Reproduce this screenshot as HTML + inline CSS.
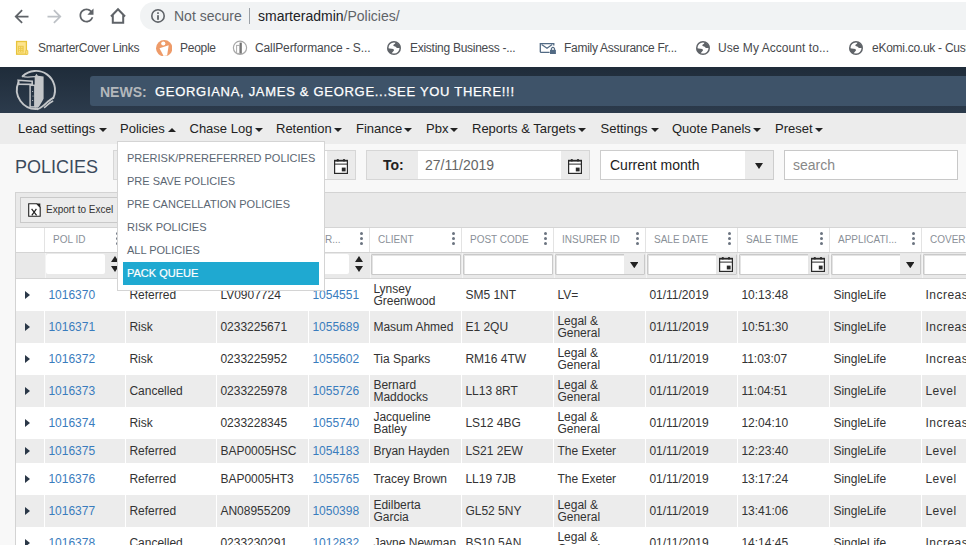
<!DOCTYPE html>
<html><head><meta charset="utf-8"><style>
*{box-sizing:border-box;margin:0;padding:0}
html,body{width:966px;height:545px;overflow:hidden;background:#f8f8f8;font-family:"Liberation Sans",sans-serif}
.a{position:absolute;white-space:nowrap}
#chrome{position:absolute;left:0;top:0;width:966px;height:67px;background:#fff}
#omni{position:absolute;left:140px;top:2px;width:900px;height:28px;border-radius:14px;background:#f1f3f4}
.omt{position:absolute;top:8px;font-size:14px;line-height:16px;white-space:nowrap}
.bm{position:absolute;top:40.5px;font-size:12px;line-height:14px;letter-spacing:-0.27px;color:#47494d;white-space:nowrap}
#hdr{position:absolute;left:0;top:67px;width:966px;height:46px;background:linear-gradient(#1f2c3a,#2c3b4c)}
#news{position:absolute;left:90px;top:76px;width:890px;height:30px;border-radius:3px;background:#3e5369}
#nav{position:absolute;left:0;top:113px;width:966px;height:31px;background:#ececec}
.nv{position:absolute;top:122px;font-size:13px;line-height:14px;color:#222;white-space:nowrap}
.car{position:absolute;width:0;height:0;border-left:4px solid transparent;border-right:4px solid transparent}
.cd{border-top:4px solid #222}
.cu{border-bottom:4px solid #222}
#grid{position:absolute;left:15px;top:192px;width:960px;height:360px;border:1px solid #d3d3d3;border-right:none;background:#fff}
#gtb{position:absolute;left:16px;top:193px;width:950px;height:35px;background:#e9e9e9;border-bottom:1px solid #d5d5d5}
.row{position:absolute;left:16px;width:950px}
.g{background:#ececec}
.c{position:absolute;top:0;height:100%;font-size:12px;line-height:12px;color:#333;white-space:nowrap;display:flex;align-items:center;padding-left:3.4px}
.lnk{color:#3a7cbd}
.sep{position:absolute;top:0;height:100%;width:1px;background:#fff}
.hd{position:absolute;top:235px;font-size:10px;line-height:10px;color:#8a9098;white-space:nowrap}
.keb{position:absolute;top:232px;width:3px;height:14px}
.keb i{position:absolute;left:0;width:3px;height:3px;border-radius:50%;background:#6b7480}
.fin{position:absolute;top:254px;height:21px;background:#fff;border:1px solid #c9c9c9;box-shadow:inset 1px 1px 0 #e4e4e4;border-radius:1px}
#menu{position:absolute;left:117px;top:141px;width:208px;height:150px;background:#fff;border:1px solid #d4d4d4}
.mi{position:absolute;left:127px;font-size:11px;line-height:12px;color:#5b6672;white-space:nowrap}
</style></head><body>
<div id="chrome"><div id="omni"></div></div>
<svg class="a" style="left:11.3px;top:5.6px" width="21" height="21" viewBox="0 0 24 24"><path fill="#5f6368" d="M20 11H7.83l5.59-5.59L12 4l-8 8 8 8 1.41-1.41L7.83 13H20v-2z"/></svg>
<svg class="a" style="left:43.6px;top:5.6px" width="21" height="21" viewBox="0 0 24 24"><path fill="#bdc1c6" d="M12 4l-1.41 1.41L16.17 11H4v2h12.17l-5.58 5.59L12 20l8-8z"/></svg>
<svg class="a" style="left:75.5px;top:5.3px" width="21" height="21" viewBox="0 0 24 24"><path fill="#5f6368" d="M17.65 6.35C16.2 4.9 14.21 4 12 4c-4.42 0-7.99 3.58-7.99 8s3.57 8 7.99 8c3.73 0 6.84-2.55 7.73-6h-2.08c-.82 2.33-3.04 4-5.65 4-3.31 0-6-2.69-6-6s2.69-6 6-6c1.66 0 3.14.69 4.22 1.78L13 11h7V4l-2.35 2.35z"/></svg>
<svg class="a" style="left:108px;top:6px" width="20" height="20" viewBox="0 0 20 20"><path fill="none" stroke="#5f6368" stroke-width="2" stroke-linejoin="miter" d="M3 10.5 L10 3.2 L17 10.5 M4.8 8.8 V16.8 H15.2 V8.8"/></svg>
<svg class="a" style="left:150px;top:8px" width="16" height="16" viewBox="0 0 16 16"><circle cx="8" cy="7.9" r="6.2" fill="none" stroke="#5f6368" stroke-width="1.6"/><rect x="7.1" y="4.3" width="1.8" height="1.6" fill="#5f6368"/><rect x="7.1" y="7.2" width="1.8" height="4.6" fill="#5f6368"/></svg>
<div class="omt" style="left:174px;color:#5f6368">Not secure</div>
<div class="a" style="left:249px;top:8px;width:1px;height:16px;background:#9aa0a6"></div>
<div class="omt" style="left:258px;color:#202124">smarteradmin<span style="color:#5f6368">/Policies/</span></div>
<svg class="a" style="left:387px;top:40.8px" width="14" height="14" viewBox="0 0 14 14"><circle cx="7" cy="7" r="7" fill="#5f6368"/><circle cx="7" cy="7" r="5.5" fill="#fff"/><path fill="#5f6368" d="M6.2 3.9 L7.9 2.8 L9 1 L13.5 5 L12.8 6.9 L9.9 6.9 L8.7 5.7 L6.7 5.1 Z"/><path fill="#5f6368" d="M0.8 7.3 L6.3 8.1 L7.1 9.3 L5.9 10.8 L4.7 12.2 L3 12.6 L0.6 9 Z"/></svg>
<svg class="a" style="left:695.5px;top:40.8px" width="14" height="14" viewBox="0 0 14 14"><circle cx="7" cy="7" r="7" fill="#5f6368"/><circle cx="7" cy="7" r="5.5" fill="#fff"/><path fill="#5f6368" d="M6.2 3.9 L7.9 2.8 L9 1 L13.5 5 L12.8 6.9 L9.9 6.9 L8.7 5.7 L6.7 5.1 Z"/><path fill="#5f6368" d="M0.8 7.3 L6.3 8.1 L7.1 9.3 L5.9 10.8 L4.7 12.2 L3 12.6 L0.6 9 Z"/></svg>
<svg class="a" style="left:849px;top:40.8px" width="14" height="14" viewBox="0 0 14 14"><circle cx="7" cy="7" r="7" fill="#5f6368"/><circle cx="7" cy="7" r="5.5" fill="#fff"/><path fill="#5f6368" d="M6.2 3.9 L7.9 2.8 L9 1 L13.5 5 L12.8 6.9 L9.9 6.9 L8.7 5.7 L6.7 5.1 Z"/><path fill="#5f6368" d="M0.8 7.3 L6.3 8.1 L7.1 9.3 L5.9 10.8 L4.7 12.2 L3 12.6 L0.6 9 Z"/></svg>
<svg class="a" style="left:15px;top:40px" width="14" height="16" viewBox="0 0 14 16"><rect x="1.6" y="1.5" width="9.8" height="12.7" fill="#fde48e" stroke="#e8c43c" stroke-width="1.3"/><rect x="3.1" y="5.8" width="5.6" height="6.7" fill="#ecc94a"/><g fill="#fde48e"><rect x="4" y="6.8" width="1.1" height="1.1"/><rect x="6.3" y="6.8" width="1.1" height="1.1"/><rect x="4" y="8.8" width="1.1" height="1.1"/><rect x="6.3" y="8.8" width="1.1" height="1.1"/><rect x="4" y="10.8" width="1.1" height="1.1"/><rect x="6.3" y="10.8" width="1.1" height="1.1"/></g><rect x="10.8" y="10.3" width="2" height="4.2" rx="0.6" fill="#fde48e" stroke="#e8c43c" stroke-width="0.9"/></svg>
<svg class="a" style="left:155.8px;top:39.8px" width="16.4" height="16.4" viewBox="0 0 16.4 16.4"><circle cx="8.2" cy="8.2" r="8.2" fill="#ee9b69"/><circle cx="7.3" cy="3.5" r="2.1" fill="#fff"/><path fill="#fff" d="M3.5 8.3 L12.7 5.3 L11.1 15.4 L7.6 16 Z"/></svg>
<svg class="a" style="left:232px;top:40px" width="16" height="16" viewBox="0 0 16 16"><circle cx="8" cy="7.8" r="6.6" fill="none" stroke="#a8a8a8" stroke-width="1.2"/><rect x="7.6" y="2.6" width="2.2" height="11" fill="#707070"/><rect x="4.6" y="5.4" width="3" height="8" fill="#fff" stroke="#aaa" stroke-width="1"/></svg>
<svg class="a" style="left:539px;top:42px" width="18" height="13" viewBox="0 0 18 13"><path fill="none" stroke="#526a84" stroke-width="1.3" d="M10.6 10.3 H1.8 Q1.3 10.3 1.3 9.8 V1.7 H14.8 V3.5"/><path fill="none" stroke="#526a84" stroke-width="1.2" d="M2.6 2.6 L8 6.3 L13.2 2.6"/><rect x="11" y="7.8" width="5.9" height="4.2" fill="#526a84"/><path fill="none" stroke="#526a84" stroke-width="1.1" d="M12.4 7.9 V6.5 Q13.95 4.3 15.5 6.5 V7.9"/></svg>
<div class="bm" style="left:38px;">SmarterCover Links</div>
<div class="bm" style="left:180px;">People</div>
<div class="bm" style="left:255px;letter-spacing:-0.12px">CallPerformance - S...</div>
<div class="bm" style="left:410px;">Existing Business -...</div>
<div class="bm" style="left:564px;">Family Assurance Fr...</div>
<div class="bm" style="left:718px;letter-spacing:0.05px">Use My Account to...</div>
<div class="bm" style="left:872px;">eKomi.co.uk - Customer</div>
<div id="hdr"></div><div id="news"></div>
<svg class="a" style="left:12px;top:67px" width="50" height="46" viewBox="12 67 50 46"><g fill="none" stroke="#c3c6c9" stroke-width="1.9" stroke-linecap="round"><path d="M22.6 76.3 A19.1 19.1 0 0 1 53.3 97.9"/><path d="M18.5 82.2 A19.1 19.1 0 0 0 37.6 108.9"/><path d="M37.4 109.2 C42 108 45 104 48 101.5 C50.5 99.6 52 98.4 53.3 97.9"/><path d="M44.6 107.4 C47 105.5 49.5 102.5 52.6 101.2" stroke-width="1.6"/><path d="M22.6 76.3 C26 77.8 30 76.8 34.7 76.7" stroke-width="1.3"/><path d="M18.2 80.2 L32.2 81.2 L32.2 84.4 L18.7 84.2 Z" stroke-width="1.6"/><rect x="30.1" y="85.3" width="4.8" height="21.6" stroke-width="1.5"/></g><path fill="#c3c6c9" d="M34.7 76.4 L36.4 73.8 L37.9 75.8 L43.6 76.4 L43.6 98.8 C41.5 102.5 40 105.5 38 107.8 L34.7 107.8 Z"/><g fill="#c3c6c9"><circle cx="32.6" cy="91.5" r="0.6"/><circle cx="33" cy="96" r="0.6"/><circle cx="32.6" cy="100.5" r="0.6"/></g></svg>
<div class="a" style="left:100px;top:85px;font-size:14px;line-height:14px;font-weight:bold;color:#b4b8bc">NEWS:</div>
<div class="a" style="left:155px;top:85px;font-size:13px;line-height:13px;color:#fff;letter-spacing:0.7px;-webkit-text-stroke:0.25px #fff">GEORGIANA, JAMES &amp; GEORGE...SEE YOU THERE!!!</div>
<div id="nav"></div>
<div class="nv" style="left:18px">Lead settings</div>
<div class="car cd" style="left:99px;top:128px"></div>
<div class="nv" style="left:120px">Policies</div>
<div class="car cu" style="left:168px;top:128px"></div>
<div class="nv" style="left:189.5px">Chase Log</div>
<div class="car cd" style="left:255px;top:128px"></div>
<div class="nv" style="left:276px">Retention</div>
<div class="car cd" style="left:334px;top:128px"></div>
<div class="nv" style="left:356px">Finance</div>
<div class="car cd" style="left:404px;top:128px"></div>
<div class="nv" style="left:426px">Pbx</div>
<div class="car cd" style="left:450px;top:128px"></div>
<div class="nv" style="left:472px">Reports &amp; Targets</div>
<div class="car cd" style="left:578px;top:128px"></div>
<div class="nv" style="left:600.5px">Settings</div>
<div class="car cd" style="left:651px;top:128px"></div>
<div class="nv" style="left:672px">Quote Panels</div>
<div class="car cd" style="left:753px;top:128px"></div>
<div class="nv" style="left:775px">Preset</div>
<div class="car cd" style="left:815px;top:128px"></div>
<div class="a" style="left:15px;top:158px;font-size:18px;line-height:18px;color:#3b4a5c">POLICIES</div>
<div class="a" style="left:113px;top:150px;width:243px;height:30px;background:#ebebeb;border:1px solid #d6d6d6"></div>
<div class="a" style="left:164px;top:151px;width:163px;height:28px;background:#fff"></div>
<svg class="a" style="left:334px;top:159px" width="14" height="15" viewBox="0 0 14 15"><rect x="0.6" y="1.4" width="12.8" height="13" fill="#fff" stroke="#2a2a2a" stroke-width="1.2"/><rect x="0.6" y="1" width="12.8" height="1.6" fill="#2a2a2a"/><rect x="0.6" y="4.6" width="12.8" height="1" fill="#2a2a2a"/><circle cx="3.8" cy="1.3" r="1.2" fill="#2a2a2a"/><circle cx="10" cy="1.3" r="1.2" fill="#2a2a2a"/><rect x="7.8" y="8.6" width="3.8" height="3.8" fill="#2a2a2a"/></svg>
<div class="a" style="left:366px;top:150px;width:224px;height:30px;background:#ebebeb;border:1px solid #d6d6d6"></div>
<div class="a" style="left:418px;top:151px;width:143px;height:28px;background:#fff"></div>
<svg class="a" style="left:568px;top:159px" width="14" height="15" viewBox="0 0 14 15"><rect x="0.6" y="1.4" width="12.8" height="13" fill="#fff" stroke="#2a2a2a" stroke-width="1.2"/><rect x="0.6" y="1" width="12.8" height="1.6" fill="#2a2a2a"/><rect x="0.6" y="4.6" width="12.8" height="1" fill="#2a2a2a"/><circle cx="3.8" cy="1.3" r="1.2" fill="#2a2a2a"/><circle cx="10" cy="1.3" r="1.2" fill="#2a2a2a"/><rect x="7.8" y="8.6" width="3.8" height="3.8" fill="#2a2a2a"/></svg>
<div class="a" style="left:383px;top:158px;font-size:14px;line-height:14px;font-weight:bold;color:#222">To:</div>
<div class="a" style="left:425px;top:158px;font-size:14px;line-height:14px;color:#666">27/11/2019</div>
<div class="a" style="left:600px;top:150px;width:174px;height:30px;background:#fff;border:1px solid #cdcdcd"></div>
<div class="a" style="left:745px;top:151px;width:28px;height:28px;background:#ebebeb"></div>
<svg class="a" style="left:755px;top:163px" width="8" height="6" viewBox="0 0 8 6"><path d="M0 0 L4.0 6 L8 0 Z" fill="#222"/></svg>
<div class="a" style="left:610px;top:158px;font-size:14px;line-height:14px;color:#222">Current month</div>
<div class="a" style="left:784px;top:150px;width:174px;height:30px;background:#fff;border:1px solid #c8c8c8"></div>
<div class="a" style="left:793px;top:158px;font-size:14px;line-height:14px;color:#888">search</div>
<div id="grid"></div><div id="gtb"></div>
<div class="a" style="left:20px;top:197px;width:300px;height:26px;background:#ececec;border:1px solid #c9c9c9"></div>
<svg class="a" style="left:28px;top:203px" width="13" height="14" viewBox="0 0 13 14"><path d="M0.7 0.7 H8.6 L12.2 4.3 V13.3 H0.7 Z" fill="#fff" stroke="#222" stroke-width="1.1"/><path d="M8.4 0.6 L12.3 4.5 L12.3 0.6 Z" fill="#222"/><path d="M3.6 5.8 L8.6 12.4 M8.4 5.8 L3.8 12.4" stroke="#222" stroke-width="1.2"/></svg>
<div class="a" style="left:46px;top:205px;font-size:10px;line-height:10px;color:#333">Export to Excel</div>
<div class="a" style="left:16px;top:228px;width:950px;height:24px;background:#fff"></div>
<div class="a" style="left:16px;top:252px;width:950px;height:27px;background:#e9e9e9;border-top:1px solid #d4d4d4;border-bottom:1px solid #d4d4d4"></div>
<div class="a" style="left:44px;top:228px;width:1px;height:24px;background:#e3e3e3"></div>
<div class="a" style="left:44.5px;top:253px;width:1.2px;height:25px;background:#f4f4f4"></div>
<div class="a" style="left:125px;top:228px;width:1px;height:24px;background:#e3e3e3"></div>
<div class="a" style="left:125.5px;top:253px;width:1.2px;height:25px;background:#f4f4f4"></div>
<div class="a" style="left:216px;top:228px;width:1px;height:24px;background:#e3e3e3"></div>
<div class="a" style="left:216.5px;top:253px;width:1.2px;height:25px;background:#f4f4f4"></div>
<div class="a" style="left:308px;top:228px;width:1px;height:24px;background:#e3e3e3"></div>
<div class="a" style="left:308.5px;top:253px;width:1.2px;height:25px;background:#f4f4f4"></div>
<div class="a" style="left:369px;top:228px;width:1px;height:24px;background:#e3e3e3"></div>
<div class="a" style="left:369.5px;top:253px;width:1.2px;height:25px;background:#f4f4f4"></div>
<div class="a" style="left:461px;top:228px;width:1px;height:24px;background:#e3e3e3"></div>
<div class="a" style="left:461.5px;top:253px;width:1.2px;height:25px;background:#f4f4f4"></div>
<div class="a" style="left:553px;top:228px;width:1px;height:24px;background:#e3e3e3"></div>
<div class="a" style="left:553.5px;top:253px;width:1.2px;height:25px;background:#f4f4f4"></div>
<div class="a" style="left:645px;top:228px;width:1px;height:24px;background:#e3e3e3"></div>
<div class="a" style="left:645.5px;top:253px;width:1.2px;height:25px;background:#f4f4f4"></div>
<div class="a" style="left:737px;top:228px;width:1px;height:24px;background:#e3e3e3"></div>
<div class="a" style="left:737.5px;top:253px;width:1.2px;height:25px;background:#f4f4f4"></div>
<div class="a" style="left:829px;top:228px;width:1px;height:24px;background:#e3e3e3"></div>
<div class="a" style="left:829.5px;top:253px;width:1.2px;height:25px;background:#f4f4f4"></div>
<div class="a" style="left:921px;top:228px;width:1px;height:24px;background:#e3e3e3"></div>
<div class="a" style="left:921.5px;top:253px;width:1.2px;height:25px;background:#f4f4f4"></div>
<div class="hd" style="left:53px">POL ID</div>
<div class="hd" style="left:378px">CLIENT</div>
<div class="hd" style="left:470px">POST CODE</div>
<div class="hd" style="left:562px">INSURER ID</div>
<div class="hd" style="left:654px">SALE DATE</div>
<div class="hd" style="left:746px">SALE TIME</div>
<div class="hd" style="left:838px">APPLICATI...</div>
<div class="hd" style="left:930px">COVER</div>
<div class="hd" style="left:325px">R...</div>
<div class="keb" style="left:116px"><i style="top:0"></i><i style="top:5px"></i><i style="top:10px"></i></div>
<div class="keb" style="left:207px"><i style="top:0"></i><i style="top:5px"></i><i style="top:10px"></i></div>
<div class="keb" style="left:299px"><i style="top:0"></i><i style="top:5px"></i><i style="top:10px"></i></div>
<div class="keb" style="left:360px"><i style="top:0"></i><i style="top:5px"></i><i style="top:10px"></i></div>
<div class="keb" style="left:452px"><i style="top:0"></i><i style="top:5px"></i><i style="top:10px"></i></div>
<div class="keb" style="left:544px"><i style="top:0"></i><i style="top:5px"></i><i style="top:10px"></i></div>
<div class="keb" style="left:636px"><i style="top:0"></i><i style="top:5px"></i><i style="top:10px"></i></div>
<div class="keb" style="left:728px"><i style="top:0"></i><i style="top:5px"></i><i style="top:10px"></i></div>
<div class="keb" style="left:820px"><i style="top:0"></i><i style="top:5px"></i><i style="top:10px"></i></div>
<div class="keb" style="left:912px"><i style="top:0"></i><i style="top:5px"></i><i style="top:10px"></i></div>
<div class="fin" style="left:923px;width:60px"></div>
<div class="a" style="left:46px;top:254px;width:59px;height:20px;background:#fff;border-radius:2px"></div>
<div class="fin" style="left:127px;width:89px"></div>
<div class="fin" style="left:218px;width:90px"></div>
<div class="a" style="left:310px;top:254px;width:39px;height:20px;background:#fff;border-radius:2px"></div>
<div class="fin" style="left:371px;width:90px"></div>
<div class="fin" style="left:463px;width:90px"></div>
<div class="fin" style="left:555px;width:90px"></div>
<div class="fin" style="left:647px;width:90px"></div>
<div class="fin" style="left:739px;width:90px"></div>
<div class="fin" style="left:831px;width:90px"></div>
<svg class="a" style="left:111px;top:256px" width="8" height="6" viewBox="0 0 8 6"><path d="M0 6 L4.0 0 L8 6 Z" fill="#222"/></svg>
<svg class="a" style="left:111px;top:266px" width="8" height="6" viewBox="0 0 8 6"><path d="M0 0 L4.0 6 L8 0 Z" fill="#222"/></svg>
<svg class="a" style="left:355px;top:256px" width="8" height="6" viewBox="0 0 8 6"><path d="M0 6 L4.0 0 L8 6 Z" fill="#222"/></svg>
<svg class="a" style="left:355px;top:266px" width="8" height="6" viewBox="0 0 8 6"><path d="M0 0 L4.0 6 L8 0 Z" fill="#222"/></svg>
<div class="a" style="left:624px;top:254px;width:20px;height:20px;background:#ebebeb"></div>
<svg class="a" style="left:629.5px;top:262px" width="8.6" height="6.2" viewBox="0 0 8.6 6.2"><path d="M0 0 L4.3 6.2 L8.6 0 Z" fill="#222"/></svg>
<div class="a" style="left:900px;top:254px;width:20px;height:20px;background:#ebebeb"></div>
<svg class="a" style="left:905.5px;top:262px" width="8.6" height="6.2" viewBox="0 0 8.6 6.2"><path d="M0 0 L4.3 6.2 L8.6 0 Z" fill="#222"/></svg>
<div class="a" style="left:716px;top:254px;width:20px;height:20px;background:#e6e6e6"></div>
<svg class="a" style="left:718.5px;top:256.5px" width="14" height="15" viewBox="0 0 14 15"><rect x="0.6" y="1.4" width="12.8" height="13" fill="#fff" stroke="#2a2a2a" stroke-width="1.2"/><rect x="0.6" y="1" width="12.8" height="1.6" fill="#2a2a2a"/><rect x="0.6" y="4.6" width="12.8" height="1" fill="#2a2a2a"/><circle cx="3.8" cy="1.3" r="1.2" fill="#2a2a2a"/><circle cx="10" cy="1.3" r="1.2" fill="#2a2a2a"/><rect x="7.8" y="8.6" width="3.8" height="3.8" fill="#2a2a2a"/></svg>
<div class="a" style="left:808px;top:254px;width:20px;height:20px;background:#e6e6e6"></div>
<svg class="a" style="left:810.5px;top:256.5px" width="14" height="15" viewBox="0 0 14 15"><rect x="0.6" y="1.4" width="12.8" height="13" fill="#fff" stroke="#2a2a2a" stroke-width="1.2"/><rect x="0.6" y="1" width="12.8" height="1.6" fill="#2a2a2a"/><rect x="0.6" y="4.6" width="12.8" height="1" fill="#2a2a2a"/><circle cx="3.8" cy="1.3" r="1.2" fill="#2a2a2a"/><circle cx="10" cy="1.3" r="1.2" fill="#2a2a2a"/><rect x="7.8" y="8.6" width="3.8" height="3.8" fill="#2a2a2a"/></svg>
<div class="row" style="top:279px;height:32px">
<div class="car" style="left:9px;top:12px;border-top:4px solid transparent;border-bottom:4px solid transparent;border-left:5.5px solid #2b3848;border-right:0"></div>
<div class="c lnk" style="left:29px;width:80px">1016370</div>
<div class="c" style="left:110px;width:90px">Referred</div>
<div class="c" style="left:201px;width:91px">LV0907724</div>
<div class="c lnk" style="left:293px;width:60px">1054551</div>
<div class="c" style="left:354px;width:91px">Lynsey<br>Greenwood</div>
<div class="c" style="left:446px;width:91px">SM5 1NT</div>
<div class="c" style="left:538px;width:91px">LV=</div>
<div class="c" style="left:630px;width:91px">01/11/2019</div>
<div class="c" style="left:722px;width:91px">10:13:48</div>
<div class="c" style="left:814px;width:91px">SingleLife</div>
<div class="c" style="left:906px;width:100px;letter-spacing:0.5px">Increase</div>
</div>
<div class="row g" style="top:311px;height:32px">
<div class="car" style="left:9px;top:12px;border-top:4px solid transparent;border-bottom:4px solid transparent;border-left:5.5px solid #2b3848;border-right:0"></div>
<div class="c lnk" style="left:29px;width:80px">1016371</div>
<div class="c" style="left:110px;width:90px">Risk</div>
<div class="c" style="left:201px;width:91px">0233225671</div>
<div class="c lnk" style="left:293px;width:60px">1055689</div>
<div class="c" style="left:354px;width:91px">Masum Ahmed</div>
<div class="c" style="left:446px;width:91px">E1 2QU</div>
<div class="c" style="left:538px;width:91px">Legal &amp;<br>General</div>
<div class="c" style="left:630px;width:91px">01/11/2019</div>
<div class="c" style="left:722px;width:91px">10:51:30</div>
<div class="c" style="left:814px;width:91px">SingleLife</div>
<div class="c" style="left:906px;width:100px;letter-spacing:0.5px">Increase</div>
<div class="sep" style="left:28px"></div>
<div class="sep" style="left:109px"></div>
<div class="sep" style="left:200px"></div>
<div class="sep" style="left:292px"></div>
<div class="sep" style="left:353px"></div>
<div class="sep" style="left:445px"></div>
<div class="sep" style="left:537px"></div>
<div class="sep" style="left:629px"></div>
<div class="sep" style="left:721px"></div>
<div class="sep" style="left:813px"></div>
<div class="sep" style="left:905px"></div>
</div>
<div class="row" style="top:343px;height:32px">
<div class="car" style="left:9px;top:12px;border-top:4px solid transparent;border-bottom:4px solid transparent;border-left:5.5px solid #2b3848;border-right:0"></div>
<div class="c lnk" style="left:29px;width:80px">1016372</div>
<div class="c" style="left:110px;width:90px">Risk</div>
<div class="c" style="left:201px;width:91px">0233225952</div>
<div class="c lnk" style="left:293px;width:60px">1055602</div>
<div class="c" style="left:354px;width:91px">Tia Sparks</div>
<div class="c" style="left:446px;width:91px">RM16 4TW</div>
<div class="c" style="left:538px;width:91px">Legal &amp;<br>General</div>
<div class="c" style="left:630px;width:91px">01/11/2019</div>
<div class="c" style="left:722px;width:91px">11:03:07</div>
<div class="c" style="left:814px;width:91px">SingleLife</div>
<div class="c" style="left:906px;width:100px;letter-spacing:0.5px">Increase</div>
</div>
<div class="row g" style="top:375px;height:32px">
<div class="car" style="left:9px;top:12px;border-top:4px solid transparent;border-bottom:4px solid transparent;border-left:5.5px solid #2b3848;border-right:0"></div>
<div class="c lnk" style="left:29px;width:80px">1016373</div>
<div class="c" style="left:110px;width:90px">Cancelled</div>
<div class="c" style="left:201px;width:91px">0233225978</div>
<div class="c lnk" style="left:293px;width:60px">1055726</div>
<div class="c" style="left:354px;width:91px">Bernard<br>Maddocks</div>
<div class="c" style="left:446px;width:91px">LL13 8RT</div>
<div class="c" style="left:538px;width:91px">Legal &amp;<br>General</div>
<div class="c" style="left:630px;width:91px">01/11/2019</div>
<div class="c" style="left:722px;width:91px">11:04:51</div>
<div class="c" style="left:814px;width:91px">SingleLife</div>
<div class="c" style="left:906px;width:100px;letter-spacing:0.5px">Level</div>
<div class="sep" style="left:28px"></div>
<div class="sep" style="left:109px"></div>
<div class="sep" style="left:200px"></div>
<div class="sep" style="left:292px"></div>
<div class="sep" style="left:353px"></div>
<div class="sep" style="left:445px"></div>
<div class="sep" style="left:537px"></div>
<div class="sep" style="left:629px"></div>
<div class="sep" style="left:721px"></div>
<div class="sep" style="left:813px"></div>
<div class="sep" style="left:905px"></div>
</div>
<div class="row" style="top:407px;height:32px">
<div class="car" style="left:9px;top:12px;border-top:4px solid transparent;border-bottom:4px solid transparent;border-left:5.5px solid #2b3848;border-right:0"></div>
<div class="c lnk" style="left:29px;width:80px">1016374</div>
<div class="c" style="left:110px;width:90px">Risk</div>
<div class="c" style="left:201px;width:91px">0233228345</div>
<div class="c lnk" style="left:293px;width:60px">1055740</div>
<div class="c" style="left:354px;width:91px">Jacqueline<br>Batley</div>
<div class="c" style="left:446px;width:91px">LS12 4BG</div>
<div class="c" style="left:538px;width:91px">Legal &amp;<br>General</div>
<div class="c" style="left:630px;width:91px">01/11/2019</div>
<div class="c" style="left:722px;width:91px">12:04:10</div>
<div class="c" style="left:814px;width:91px">SingleLife</div>
<div class="c" style="left:906px;width:100px;letter-spacing:0.5px">Increase</div>
</div>
<div class="row g" style="top:439px;height:24px">
<div class="car" style="left:9px;top:8px;border-top:4px solid transparent;border-bottom:4px solid transparent;border-left:5.5px solid #2b3848;border-right:0"></div>
<div class="c lnk" style="left:29px;width:80px">1016375</div>
<div class="c" style="left:110px;width:90px">Referred</div>
<div class="c" style="left:201px;width:91px">BAP0005HSC</div>
<div class="c lnk" style="left:293px;width:60px">1054183</div>
<div class="c" style="left:354px;width:91px">Bryan Hayden</div>
<div class="c" style="left:446px;width:91px">LS21 2EW</div>
<div class="c" style="left:538px;width:91px">The Exeter</div>
<div class="c" style="left:630px;width:91px">01/11/2019</div>
<div class="c" style="left:722px;width:91px">12:23:40</div>
<div class="c" style="left:814px;width:91px">SingleLife</div>
<div class="c" style="left:906px;width:100px;letter-spacing:0.5px">Level</div>
<div class="sep" style="left:28px"></div>
<div class="sep" style="left:109px"></div>
<div class="sep" style="left:200px"></div>
<div class="sep" style="left:292px"></div>
<div class="sep" style="left:353px"></div>
<div class="sep" style="left:445px"></div>
<div class="sep" style="left:537px"></div>
<div class="sep" style="left:629px"></div>
<div class="sep" style="left:721px"></div>
<div class="sep" style="left:813px"></div>
<div class="sep" style="left:905px"></div>
</div>
<div class="row" style="top:463px;height:32px">
<div class="car" style="left:9px;top:12px;border-top:4px solid transparent;border-bottom:4px solid transparent;border-left:5.5px solid #2b3848;border-right:0"></div>
<div class="c lnk" style="left:29px;width:80px">1016376</div>
<div class="c" style="left:110px;width:90px">Referred</div>
<div class="c" style="left:201px;width:91px">BAP0005HT3</div>
<div class="c lnk" style="left:293px;width:60px">1055765</div>
<div class="c" style="left:354px;width:91px">Tracey Brown</div>
<div class="c" style="left:446px;width:91px">LL19 7JB</div>
<div class="c" style="left:538px;width:91px">The Exeter</div>
<div class="c" style="left:630px;width:91px">01/11/2019</div>
<div class="c" style="left:722px;width:91px">13:17:24</div>
<div class="c" style="left:814px;width:91px">SingleLife</div>
<div class="c" style="left:906px;width:100px;letter-spacing:0.5px">Level</div>
</div>
<div class="row g" style="top:495px;height:32px">
<div class="car" style="left:9px;top:12px;border-top:4px solid transparent;border-bottom:4px solid transparent;border-left:5.5px solid #2b3848;border-right:0"></div>
<div class="c lnk" style="left:29px;width:80px">1016377</div>
<div class="c" style="left:110px;width:90px">Referred</div>
<div class="c" style="left:201px;width:91px">AN08955209</div>
<div class="c lnk" style="left:293px;width:60px">1050398</div>
<div class="c" style="left:354px;width:91px">Edilberta<br>Garcia</div>
<div class="c" style="left:446px;width:91px">GL52 5NY</div>
<div class="c" style="left:538px;width:91px">Legal &amp;<br>General</div>
<div class="c" style="left:630px;width:91px">01/11/2019</div>
<div class="c" style="left:722px;width:91px">13:41:06</div>
<div class="c" style="left:814px;width:91px">SingleLife</div>
<div class="c" style="left:906px;width:100px;letter-spacing:0.5px">Level</div>
<div class="sep" style="left:28px"></div>
<div class="sep" style="left:109px"></div>
<div class="sep" style="left:200px"></div>
<div class="sep" style="left:292px"></div>
<div class="sep" style="left:353px"></div>
<div class="sep" style="left:445px"></div>
<div class="sep" style="left:537px"></div>
<div class="sep" style="left:629px"></div>
<div class="sep" style="left:721px"></div>
<div class="sep" style="left:813px"></div>
<div class="sep" style="left:905px"></div>
</div>
<div class="row" style="top:527px;height:32px">
<div class="car" style="left:9px;top:12px;border-top:4px solid transparent;border-bottom:4px solid transparent;border-left:5.5px solid #2b3848;border-right:0"></div>
<div class="c lnk" style="left:29px;width:80px">1016378</div>
<div class="c" style="left:110px;width:90px">Cancelled</div>
<div class="c" style="left:201px;width:91px">0233230291</div>
<div class="c lnk" style="left:293px;width:60px">1012832</div>
<div class="c" style="left:354px;width:91px">Jayne Newman</div>
<div class="c" style="left:446px;width:91px">BS10 5AN</div>
<div class="c" style="left:538px;width:91px">Legal &amp;<br>General</div>
<div class="c" style="left:630px;width:91px">01/11/2019</div>
<div class="c" style="left:722px;width:91px">14:14:45</div>
<div class="c" style="left:814px;width:91px">SingleLife</div>
<div class="c" style="left:906px;width:100px;letter-spacing:0.5px">Increase</div>
</div>
<div id="menu"></div>
<div class="mi" style="top:152px">PRERISK/PREREFERRED POLICIES</div>
<div class="mi" style="top:175px">PRE SAVE POLICIES</div>
<div class="mi" style="top:198px">PRE CANCELLATION POLICIES</div>
<div class="mi" style="top:221px">RISK POLICIES</div>
<div class="mi" style="top:244px">ALL POLICIES</div>
<div class="a" style="left:123px;top:262px;width:196px;height:23px;background:#1fa9d1"></div>
<div class="mi" style="top:267px;color:#fff;-webkit-text-stroke:0.2px #fff">PACK QUEUE</div>
</body></html>
